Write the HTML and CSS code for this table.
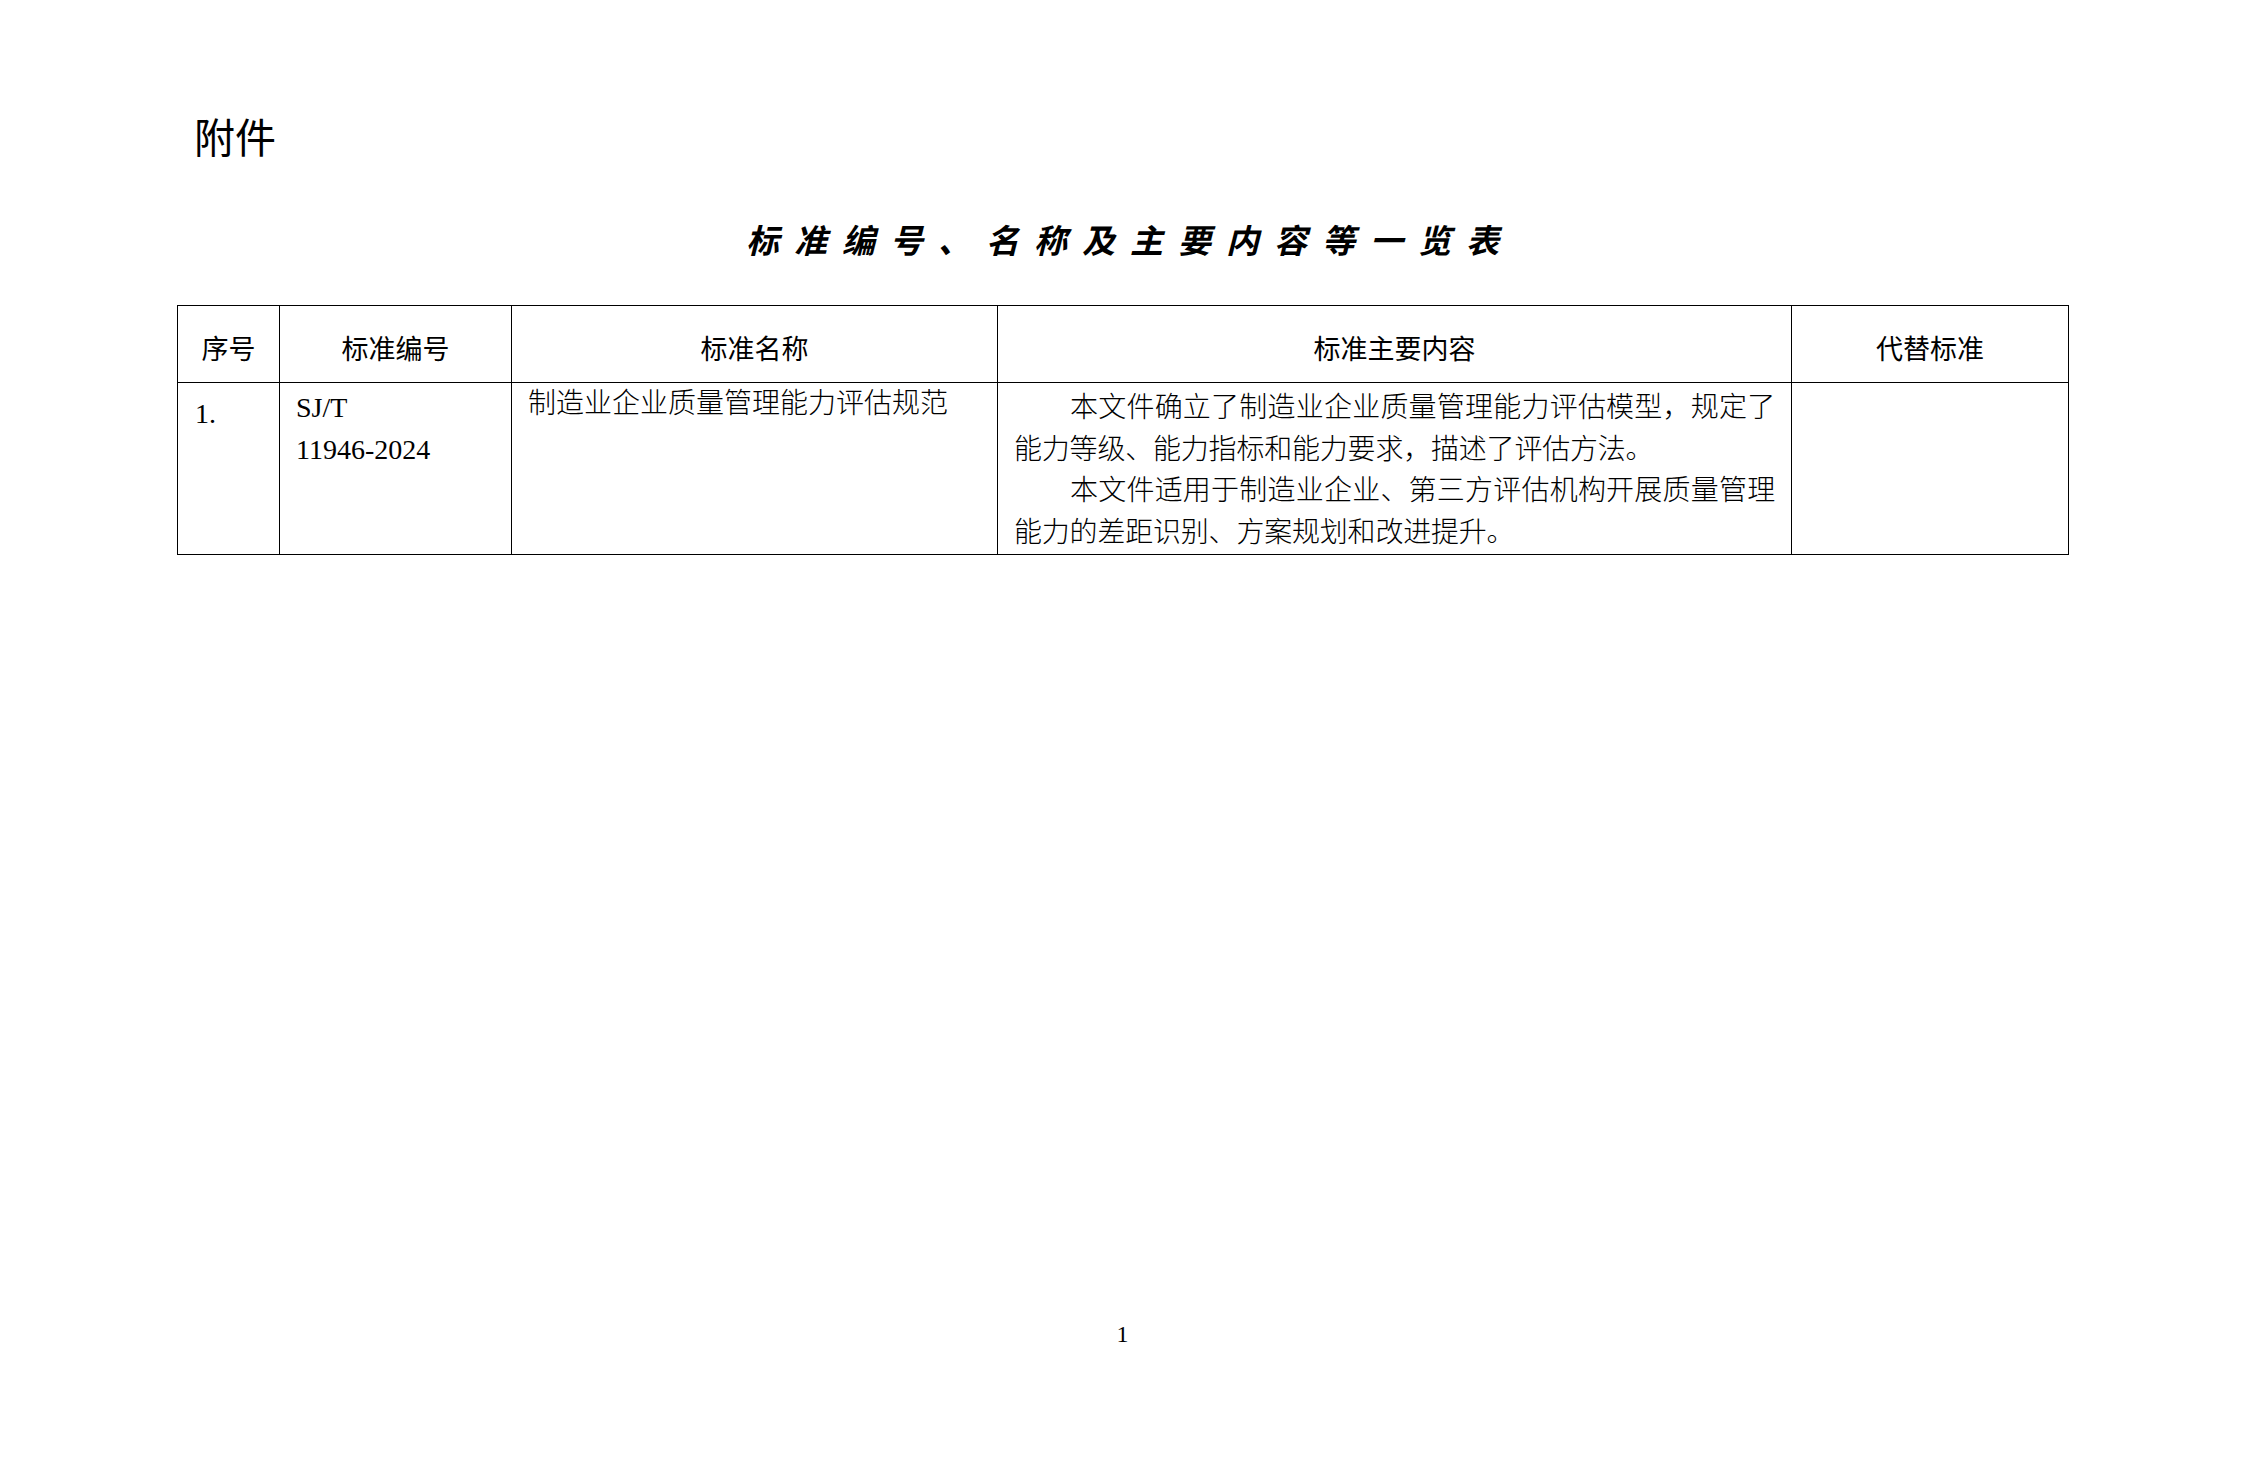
FILE: index.html
```html
<!DOCTYPE html>
<html lang="zh-CN">
<head>
<meta charset="utf-8">
<title>附件</title>
<link rel="stylesheet" href="styles.css">
</head>
<body>
<div class="page">
  <div class="attach">附件</div>
  <h1 class="title">标准编号、名称及主要内容等一览表</h1>
  <table class="std">
    <colgroup>
      <col class="c-no">
      <col class="c-code">
      <col class="c-name">
      <col class="c-content">
      <col class="c-replace">
    </colgroup>
    <thead>
      <tr>
        <th>序号</th>
        <th>标准编号</th>
        <th>标准名称</th>
        <th>标准主要内容</th>
        <th>代替标准</th>
      </tr>
    </thead>
    <tbody>
      <tr>
        <td class="no">1.</td>
        <td>SJ/T<br>11946-2024</td>
        <td class="name">制造业企业质量管理能力评估规范</td>
        <td class="content">
          <p>本文件确立了制造业企业质量管理能力评估模型，规定了能力等级、能力指标和能力要求，描述了评估方法。</p>
          <p>本文件适用于制造业企业、第三方评估机构开展质量管理能力的差距识别、方案规划和改进提升。</p>
        </td>
        <td></td>
      </tr>
    </tbody>
  </table>
  <div class="pageno">1</div>
</div>
</body>
</html>
```

FILE: styles.css
```css
html, body {
  margin: 0;
  padding: 0;
  background: #ffffff;
  color: #000000;
}

.page {
  width: 2245px;
  height: 1460px;
  box-sizing: border-box;
  padding: 107px 177px 0 177px;
  overflow: hidden;
}

.attach {
  padding-left: 17px;
  height: 56px;
  line-height: 56px;
  font-family: "Noto Sans CJK SC", "Liberation Sans", sans-serif;
  font-size: 41px;
  font-weight: 400;
}

.title {
  margin: 48px 0 0 0;
  height: 56px;
  line-height: 56px;
  text-align: center;
  font-family: "Noto Sans CJK SC", "Liberation Sans", sans-serif;
  font-size: 33px;
  font-weight: 700;
  font-style: italic;
  letter-spacing: 15px;
  padding-left: 15px;
}

.std {
  margin-top: 38px;
  width: 100%;
  border-collapse: collapse;
  table-layout: fixed;
}

.c-no { width: 102px; }
.c-code { width: 232px; }
.c-name { width: 486px; }
.c-content { width: 794px; }
.c-replace { width: 277px; }

.std th,
.std td {
  border: 1px solid #000000;
}

.std th {
  height: 77px;
  padding: 6px 0 0 0;
  box-sizing: border-box;
  vertical-align: middle;
  text-align: center;
  font-family: "Noto Sans CJK SC", "Liberation Sans", sans-serif;
  font-size: 27px;
  font-weight: 400;
}

.std td {
  padding: 4px 16px 0 16px;
  vertical-align: top;
  text-align: left;
  font-family: "Liberation Serif", "Noto Sans CJK SC", serif;
  font-size: 28px;
  font-weight: 300;
  line-height: 41.7px;
}

.std td.no {
  padding-top: 10px;
  padding-left: 17px;
}

.std td.name {
  padding-top: 0;
}

.content p {
  margin: 0;
  text-indent: 2em;
  text-align: justify;
  letter-spacing: -0.2px;
}

.pageno {
  margin-top: 764px;
  height: 30px;
  line-height: 30px;
  text-align: center;
  font-family: "Liberation Serif", serif;
  font-size: 24px;
}
```
